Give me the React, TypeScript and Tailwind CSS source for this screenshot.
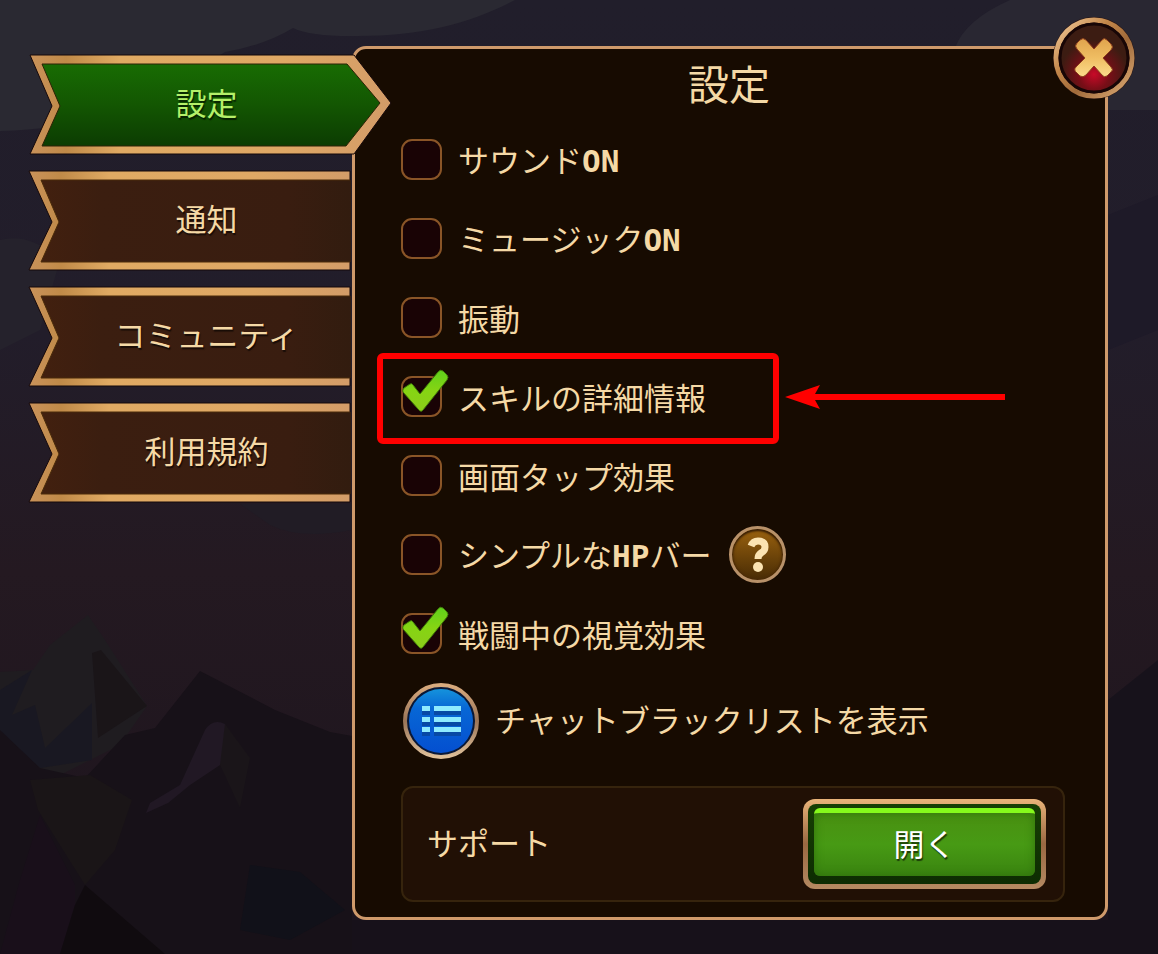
import { useState, type ReactNode } from 'react'
import clsx from 'clsx'

interface Option {
  id: string
  label: ReactNode
  checked?: boolean
  help?: boolean
  highlighted?: boolean
}

const TABS = ['設定', '通知', 'コミュニティ', '利用規約']

function Latin({ children }: { children: ReactNode }) {
  return <span className="font-['DejaVu_Sans_Mono',monospace] font-bold">{children}</span>
}

const OPTIONS: Option[] = [
  { id: 'sound', label: <>サウンド<Latin>ON</Latin></> },
  { id: 'music', label: <>ミュージック<Latin>ON</Latin></> },
  { id: 'vibration', label: '振動' },
  { id: 'skill', label: 'スキルの詳細情報', checked: true, highlighted: true },
  { id: 'tap', label: '画面タップ効果' },
  { id: 'hp', label: <>シンプルな<Latin>HP</Latin>バー</>, help: true },
  { id: 'battle', label: '戦闘中の視覚効果', checked: true },
]

function Backdrop() {
  return (
    <svg
      className="absolute inset-0 h-full w-full"
      viewBox="0 0 1158 954"
      preserveAspectRatio="xMidYMid slice"
      aria-hidden="true"
    >
      <defs>
        <linearGradient id="sky" x1="0" y1="0" x2="0" y2="1">
          <stop offset="0" stopColor="#211e2b" />
          <stop offset="0.35" stopColor="#221d2a" />
          <stop offset="0.6" stopColor="#241921" />
          <stop offset="1" stopColor="#1c141d" />
        </linearGradient>
      </defs>
      <rect width="1158" height="954" fill="url(#sky)" />
      <path d="M0 0H515C470 24 420 37 350 36Q310 36 293 28Q265 45 225 52L130 110Q60 130 0 131Z" fill="#2a2932" />
      <path d="M1010 0H1158V110H1108L955 48Q965 20 1010 0Z" fill="#292732" />
      <path d="M0 240Q30 232 60 260L40 330L0 350Z" fill="#25222c" />
      <path d="M1108 215L1158 195V330L1108 350Z" fill="#1e1a28" />
      <path d="M240 504H352V530Q300 540 270 525Z" fill="#211c25" />
      <path d="M0 672L33 670L50 645L88 615L105 640L147 706L120 745L60 775L0 770Z" fill="#1f1c20" />
      <path d="M0 690L32 670L12 715L35 705L45 748L92 703V760L40 768L0 735Z" fill="#191822" />
      <path d="M92 653L101 650L147 706L98 738Z" fill="#1a1518" />
      <path d="M0 730L40 768L85 778L125 735L155 728L200 671L275 710L330 732L352 736V954H0Z" fill="#171118" />
      <path d="M146 813L150 803L180 785L205 730Q213 718 225 724L235 745L220 765L190 785L168 803Z" fill="#211824" />
      <path d="M225 724L250 758L240 808L220 765Z" fill="#1a1519" />
      <path d="M30 780L90 775L132 800L115 850L85 885L38 810Z" fill="#1a1517" />
      <path d="M40 815L75 885V905L60 954H0L20 880Z" fill="#190f1a" />
      <path d="M85 885L165 954H60L75 905Z" fill="#100b0f" />
      <path d="M250 865L300 872L345 910L290 940L240 930Z" fill="#111119" />
      <path d="M1108 700L1158 660V954H1108Z" fill="#17121b" />
      <path d="M352 920H1158V954H352Z" fill="#17111a" />
    </svg>
  )
}

function RibbonShape({ active }: { active: boolean }) {
  return (
    <svg className="absolute left-0 top-0 overflow-visible" width="362" height="100" aria-hidden="true">
      <defs>
        <linearGradient id="ribbonGold" x1="0" y1="0" x2="1" y2="0">
          <stop offset="0" stopColor="#c9925a" />
          <stop offset="0.1" stopColor="#c08a48" />
          <stop offset="0.25" stopColor="#e0aa63" />
          <stop offset="0.7" stopColor="#dfa865" />
          <stop offset="1" stopColor="#d39c68" />
        </linearGradient>
        <linearGradient id="ribbonGreen" x1="0" y1="0" x2="0" y2="1">
          <stop offset="0" stopColor="#186c03" />
          <stop offset="0.5" stopColor="#135602" />
          <stop offset="1" stopColor="#0c3c02" />
        </linearGradient>
        <linearGradient id="ribbonBrown" x1="0" y1="0" x2="1" y2="0">
          <stop offset="0" stopColor="#42200f" />
          <stop offset="0.2" stopColor="#3b1e10" />
          <stop offset="0.8" stopColor="#391d10" />
          <stop offset="1" stopColor="#321c0f" />
        </linearGradient>
      </defs>
      {active ? (
        <>
          <path d="M1 0H325L362 48L325 99H1L23 51Z" fill="url(#ribbonGold)" stroke="#15080a" strokeWidth="1" />
          <path d="M13 9H318L351 48L317 91H13L31 51Z" fill="url(#ribbonGreen)" stroke="#2c2206" strokeWidth="1" />
        </>
      ) : (
        <>
          <path d="M0 0H321V99H0L23 51Z" fill="url(#ribbonGold)" stroke="#15080a" strokeWidth="1" />
          <path d="M12 9H322V91H12L30 51Z" fill="url(#ribbonBrown)" />
          <path d="M321 9H12L30 51L12 91H321" fill="none" stroke="#4a2b0a" strokeWidth="1" />
        </>
      )}
    </svg>
  )
}

function CheckMark() {
  return (
    <svg
      className="pointer-events-none absolute -top-2 left-0 opacity-0 peer-checked:opacity-100"
      width="50"
      height="46"
      viewBox="0 0 50 46"
      aria-hidden="true"
    >
      <defs>
        <linearGradient id="checkGreen" x1="0" y1="0" x2="0" y2="1">
          <stop offset="0" stopColor="#5fd01c" />
          <stop offset="0.5" stopColor="#86d413" />
          <stop offset="1" stopColor="#8ccc1a" />
        </linearGradient>
      </defs>
      <path
        d="M3 20L9 16Q11 15 12 17L19 26L37 4Q39 1 42 3L46 7Q48 9 46 12L22 42Q20 45 17 41L2 24Q1 22 3 20Z"
        fill="url(#checkGreen)"
        stroke="#3f7a08"
        strokeWidth="1"
      />
    </svg>
  )
}

function Callout() {
  return (
    <>
      <span className="pointer-events-none absolute -left-6 -bottom-2 -top-1 w-[402px] rounded-md border-6 border-[#ff0000]" />
      <svg
        className="pointer-events-none absolute left-96 top-7 overflow-visible"
        width="220"
        height="24"
        viewBox="0 0 220 24"
        aria-hidden="true"
      >
        <path d="M0 12L35 0L30 9H220V15H30L35 24Z" fill="#ff0000" />
      </svg>
    </>
  )
}

function OptionRow({ option }: { option: Option }) {
  const [checked, setChecked] = useState(Boolean(option.checked))

  return (
    <li className="relative flex h-[79px] items-center">
      <span className="relative h-[41px] w-[41px] shrink-0">
        <input
          id={option.id}
          type="checkbox"
          checked={checked}
          onChange={e => setChecked(e.target.checked)}
          className="peer block h-full w-full cursor-pointer appearance-none rounded-[11px] border-2 border-[#8a5527] bg-[#190305]"
        />
        <CheckMark />
      </span>
      <label htmlFor={option.id} className="cursor-pointer whitespace-nowrap pl-4">
        {option.label}
      </label>
      {option.help && (
        <button
          type="button"
          aria-label="ヘルプ"
          className="ml-[18px] flex h-[57px] w-[57px] cursor-pointer items-center justify-center rounded-full border-3 border-[#b89169] bg-linear-to-b from-[#9a620f] to-[#492c05] shadow-[inset_0_2px_2px_#3a2006,inset_0_0_3px_1px_#4a2a08]"
        >
          <svg width="24" height="38" viewBox="0 0 24 38" aria-hidden="true">
            <path
              d="M5 10Q7 5 12 5Q19 5 19 11Q19 15 15 17Q12 19 12 23"
              fill="none"
              stroke="#fbe3b2"
              strokeWidth="7"
            />
            <circle cx="12" cy="31" r="5" fill="#fbe3b2" />
          </svg>
        </button>
      )}
      {option.highlighted && <Callout />}
    </li>
  )
}

function CloseButton() {
  return (
    <button
      type="button"
      aria-label="閉じる"
      className="absolute -right-[31px] -top-[33px] h-[84px] w-[84px] cursor-pointer rounded-full"
    >
      <svg width="84" height="84" viewBox="0 0 84 84" aria-hidden="true">
        <defs>
          <linearGradient id="closeRing" x1="0" y1="0" x2="1" y2="1">
            <stop offset="0" stopColor="#f6cf9f" />
            <stop offset="0.35" stopColor="#c28649" />
            <stop offset="0.6" stopColor="#a06a3a" />
            <stop offset="1" stopColor="#dfae78" />
          </linearGradient>
          <radialGradient id="closeFace" cx="0.5" cy="0.74" r="0.5">
            <stop offset="0" stopColor="#c80a28" />
            <stop offset="0.45" stopColor="#780e17" />
            <stop offset="1" stopColor="#3c1c12" />
          </radialGradient>
          <linearGradient id="closeCross" gradientUnits="userSpaceOnUse" x1="42" y1="22" x2="42" y2="61">
            <stop offset="0" stopColor="#dfa34c" />
            <stop offset="0.5" stopColor="#efbd62" />
            <stop offset="1" stopColor="#fcdc8c" />
          </linearGradient>
        </defs>
        <circle cx="42" cy="42" r="41" fill="#2a1410" />
        <circle cx="42" cy="42" r="38" fill="none" stroke="url(#closeRing)" strokeWidth="5" />
        <circle cx="42" cy="42" r="34" fill="url(#closeFace)" stroke="#180606" strokeWidth="3" />
        <path
          d="M25 27L28 24Q31 21 34 24L42 33L50 24Q52 21 55 24L59 28Q62 31 59 34L51 42L59 51Q62 54 59 56L55 60Q52 62 50 59L42 50L34 59Q31 62 28 60L25 57Q21 54 24 51L33 42L25 33Q22 30 25 27Z"
          fill="url(#closeCross)"
          stroke="#8c3d1c"
          strokeWidth="1"
        />
      </svg>
    </button>
  )
}

function BlacklistIcon() {
  return (
    <svg className="shrink-0" width="80" height="80" viewBox="0 0 80 80" aria-hidden="true">
      <defs>
        <linearGradient id="listRing" x1="0" y1="0" x2="0" y2="1">
          <stop offset="0" stopColor="#d9ab7e" />
          <stop offset="0.5" stopColor="#9a7558" />
          <stop offset="1" stopColor="#dfc09a" />
        </linearGradient>
        <linearGradient id="listFace" x1="0" y1="0" x2="0" y2="1">
          <stop offset="0" stopColor="#1593dc" />
          <stop offset="0.3" stopColor="#0767d5" />
          <stop offset="1" stopColor="#044fd0" />
        </linearGradient>
      </defs>
      <circle cx="40" cy="40" r="36" fill="#0a1836" stroke="url(#listRing)" strokeWidth="4" />
      <circle cx="40" cy="40" r="32" fill="url(#listFace)" />
      <g fill="#0749a5">
        <path d="M21 29H29V34H21ZM33 29H60V34H33ZM21 40H29V45H21ZM33 40H60V45H33ZM21 50H29V55H21ZM33 50H60V55H33Z" />
      </g>
      <g fill="#8eeaff">
        <path d="M21 25H29V30H21ZM33 25H60V30H33ZM21 36H29V41H21ZM33 36H60V41H33ZM21 46H29V51H21ZM33 46H60V51H33Z" />
      </g>
    </svg>
  )
}

export default function App() {
  const [activeTab, setActiveTab] = useState(0)

  return (
    <div className="relative min-h-screen overflow-hidden bg-[#1c1720] font-['Noto_Sans_CJK_JP',sans-serif] text-[31px] leading-10 text-[#f5d9a6]">
      <Backdrop />

      <div className="relative flex items-start pb-8 pl-[29px] pr-[50px] pt-[46px]">
        <nav className="relative z-10 flex w-[323px] shrink-0 flex-col gap-4 pt-[9px]">
          {TABS.map((tab, i) => (
            <button
              key={tab}
              type="button"
              onClick={() => setActiveTab(i)}
              className={clsx(
                'relative h-[100px] w-full cursor-pointer pb-1.5 pl-8',
                i === activeTab && 'text-[#b4f069]',
              )}
            >
              <RibbonShape active={i === activeTab} />
              <span className="relative [text-shadow:1px_2px_1px_rgba(0,0,0,0.6)]">{tab}</span>
            </button>
          ))}
        </nav>

        <main className="relative min-w-0 flex-1 rounded-[14px] border-3 border-[#cf9a6b] bg-[#170b01] pb-[15px] pl-[46px] pr-10">
          <h1 className="h-[71px] pr-2 text-center text-[41px] leading-[66px]">設定</h1>
          <CloseButton />

          <ul>
            {OPTIONS.map(option => (
              <OptionRow key={option.id} option={option} />
            ))}
          </ul>

          <button type="button" className="mt-2 flex cursor-pointer items-center gap-3.5 whitespace-nowrap">
            <BlacklistIcon />
            <span className="pb-1">チャットブラックリストを表示</span>
          </button>

          <section className="mt-[25px] flex items-center justify-between rounded-xl border-2 border-[#36240d] bg-[#211005] py-[11px] pl-6 pr-[17px]">
            <span className="pb-1">サポート</span>
            <button
              type="button"
              className="h-[90px] w-[243px] cursor-pointer rounded-xl bg-linear-to-b from-[#eab47a] via-[#9a6842] to-[#b58a62] p-[5px] text-white"
            >
              <span className="block h-full rounded-lg bg-linear-to-b from-[#173f04] to-[#0d2c02] px-1.5 pb-2 pt-1">
                <span className="flex h-full items-center justify-center rounded-md border-t-5 border-[#86fa1c] bg-linear-to-b from-[#499011] via-[#479a14] to-[#3a8410] pb-1 shadow-[inset_0_0_10px_#2f720c] [text-shadow:1px_2px_1px_rgba(0,0,0,0.6)]">
                  開く
                </span>
              </span>
            </button>
          </section>
        </main>
      </div>
    </div>
  )
}
